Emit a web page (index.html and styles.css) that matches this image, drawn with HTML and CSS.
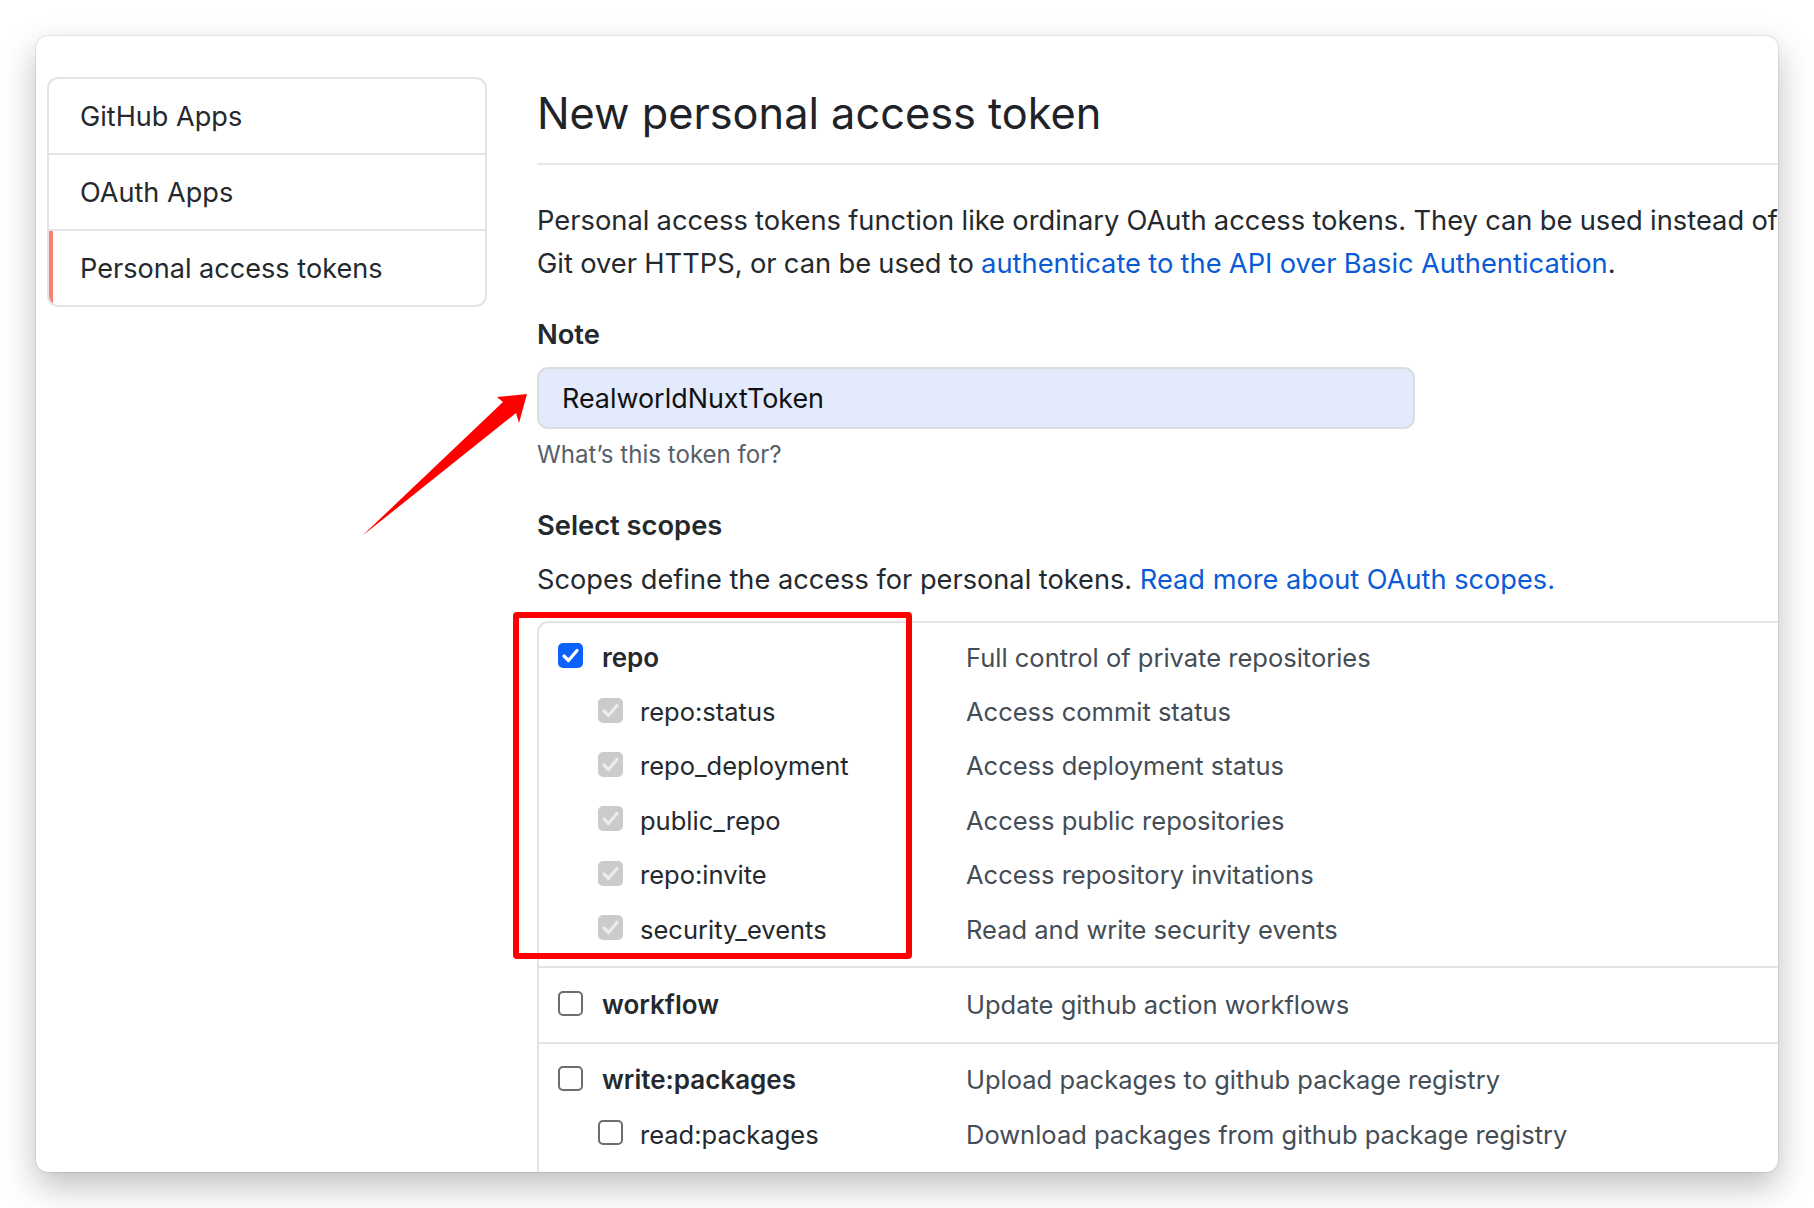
FILE: index.html
```html
<!DOCTYPE html>
<html lang="en">
<head>
<meta charset="utf-8">
<title>New personal access token</title>
<link rel="stylesheet" href="styles.css">
</head>
<body>
<div class="window">
  <nav class="menu">
    <a class="menu-item">GitHub Apps</a>
    <a class="menu-item">OAuth Apps</a>
    <a class="menu-item selected">Personal access tokens</a>
  </nav>
  <main class="main">
    <h1 class="subhead">New personal access token</h1>
    <p class="intro">Personal access tokens function like ordinary OAuth access tokens. They can be used instead of<br>Git over HTTPS, or can be used to <a class="link">authenticate to the API over Basic Authentication</a>.</p>
    <div class="label note-label">Note</div>
    <div class="input">RealworldNuxtToken</div>
    <p class="hint">What’s this token for?</p>
    <div class="label scopes-title">Select scopes</div>
    <p class="scopes-intro">Scopes define the access for personal tokens. <a class="link">Read more about OAuth scopes.</a></p>
    <div class="scopes">
      <div class="group first">
        <div class="row">
          <div class="name"><span class="cb checked"><svg viewBox="0 0 25 25"><polyline points="6,13 10.5,17.5 19,7.5"/></svg></span><b>repo</b></div>
          <div class="desc">Full control of private repositories</div>
        </div>
        <div class="row sub">
          <div class="name"><span class="cb disabled"><svg viewBox="0 0 25 25"><polyline points="6,13 10.5,17.5 19,7.5"/></svg></span>repo:status</div>
          <div class="desc">Access commit status</div>
        </div>
        <div class="row sub">
          <div class="name"><span class="cb disabled"><svg viewBox="0 0 25 25"><polyline points="6,13 10.5,17.5 19,7.5"/></svg></span>repo_deployment</div>
          <div class="desc">Access deployment status</div>
        </div>
        <div class="row sub">
          <div class="name"><span class="cb disabled"><svg viewBox="0 0 25 25"><polyline points="6,13 10.5,17.5 19,7.5"/></svg></span>public_repo</div>
          <div class="desc">Access public repositories</div>
        </div>
        <div class="row sub">
          <div class="name"><span class="cb disabled"><svg viewBox="0 0 25 25"><polyline points="6,13 10.5,17.5 19,7.5"/></svg></span>repo:invite</div>
          <div class="desc">Access repository invitations</div>
        </div>
        <div class="row sub">
          <div class="name"><span class="cb disabled"><svg viewBox="0 0 25 25"><polyline points="6,13 10.5,17.5 19,7.5"/></svg></span>security_events</div>
          <div class="desc">Read and write security events</div>
        </div>
      </div>
      <div class="group">
        <div class="row">
          <div class="name"><span class="cb empty"></span><b>workflow</b></div>
          <div class="desc">Update github action workflows</div>
        </div>
      </div>
      <div class="group">
        <div class="row">
          <div class="name"><span class="cb empty"></span><b>write:packages</b></div>
          <div class="desc">Upload packages to github package registry</div>
        </div>
        <div class="row sub">
          <div class="name"><span class="cb empty"></span>read:packages</div>
          <div class="desc">Download packages from github package registry</div>
        </div>
      </div>
    </div>
  </main>
</div>
<div class="callout-box"></div>
<svg class="arrow" viewBox="0 0 1814 1208" width="1814" height="1208">
  <polygon points="362,536 503,402 497,397 527,394 519,423 516,413"/>
</svg>
</body>
</html>
```

FILE: styles.css
```css
* {
  box-sizing: border-box;
}

html,
body {
  margin: 0;
  padding: 0;
}

body {
  position: relative;
  width: 1814px;
  height: 1208px;
  overflow: hidden;
  background: #ffffff;
  padding: 36px;
  font-family: Inter, "Noto Sans", "Liberation Sans", sans-serif;
  color: #24292e;
}

.window {
  width: 1742px;
  height: 1136px;
  background: #ffffff;
  border-radius: 12px;
  overflow: hidden;
  box-shadow: 0 14px 34px rgba(0, 0, 0, 0.26), 0 0 2px rgba(0, 0, 0, 0.25);
  display: flex;
  align-items: flex-start;
  gap: 50px;
  padding: 41px 0 0 11px;
}

/* Sidebar menu */
.menu {
  flex: 0 0 440px;
  border: 2px solid #e1e4e8;
  border-radius: 11px;
  overflow: hidden;
}

.menu-item {
  box-sizing: content-box;
  display: flex;
  align-items: center;
  height: 73px;
  padding-left: 31px;
  padding-top: 1px;
  font-size: 27.1px;
  color: #24292e;
}

.menu-item + .menu-item {
  border-top: 2px solid #e1e4e8;
}

.menu-item.selected {
  box-shadow: inset 4px 0 0 #f9826c;
}

/* Main column */
.main {
  flex: 0 0 1400px;
  min-width: 1400px;
}

.subhead {
  margin: 6px 0 0;
  padding-bottom: 20px;
  border-bottom: 2px solid #e6e8eb;
  font-size: 43.3px;
  font-weight: 400;
  line-height: 60px;
  color: #1f2328;
}

.intro {
  margin: 34px 0 0;
  font-size: 27.3px;
  line-height: 43px;
  word-spacing: -0.4px;
  white-space: nowrap;
}

.link {
  color: #0a5bd6;
}

.label {
  font-size: 27.3px;
  font-weight: 600;
  line-height: 36px;
}

.note-label {
  margin-top: 32px;
}

.input {
  margin-top: 14px;
  width: 878px;
  height: 62px;
  border: 2px solid #dadde1;
  border-radius: 11px;
  background: #e2eafc;
  padding-left: 23px;
  display: flex;
  align-items: center;
  font-size: 26.9px;
  color: #111111;
}

.hint {
  margin: 10px 0 0;
  font-size: 24.1px;
  line-height: 32px;
  color: #586069;
}

.scopes-title {
  margin-top: 37px;
}

.scopes-intro {
  margin: 18px 0 0;
  font-size: 27.2px;
  line-height: 36px;
  white-space: nowrap;
}

/* Scopes table */
.scopes {
  margin-top: 23px;
  width: 1400px;
  border: 2px solid #e1e4e8;
  border-radius: 11px 0 0 0;
  font-size: 25.5px;
}

.group {
  padding: 9px 0 10px;
  border-top: 2px solid #e1e4e8;
}

.group.first {
  border-top: none;
  padding-top: 7px;
}

.row {
  display: flex;
  align-items: center;
  height: 54.4px;
}

.name {
  flex: 0 0 427px;
  display: flex;
  align-items: center;
  gap: 19px;
  padding-left: 19px;
  white-space: nowrap;
}

.row.sub .name {
  padding-left: 59px;
  gap: 17px;
}

.name b {
  font-weight: 600;
  font-size: 26px;
}

.desc {
  color: #444d56;
  white-space: nowrap;
}

/* Checkboxes */
.cb {
  flex: none;
  width: 25px;
  height: 25px;
  border-radius: 5px;
  display: block;
  margin-top: -3px;
}

.cb svg {
  display: block;
  width: 25px;
  height: 25px;
  fill: none;
  stroke-width: 3.2;
  stroke-linecap: round;
  stroke-linejoin: round;
}

.cb.checked {
  background: #0b62fb;
}

.cb.checked svg {
  stroke: #ffffff;
}

.cb.disabled {
  background: #cbcbcb;
}

.cb.disabled svg {
  stroke: #ececec;
}

.cb.empty {
  background: #ffffff;
  border: 2px solid #6d6d6d;
}

/* Annotations drawn over the screenshot */
.callout-box {
  position: absolute;
  left: 513px;
  top: 612px;
  width: 399px;
  height: 347px;
  border: 6px solid #ff0000;
  border-radius: 4px;
}

.arrow {
  position: absolute;
  left: 0;
  top: 0;
  pointer-events: none;
}

.arrow polygon {
  fill: #ff0000;
}
```
